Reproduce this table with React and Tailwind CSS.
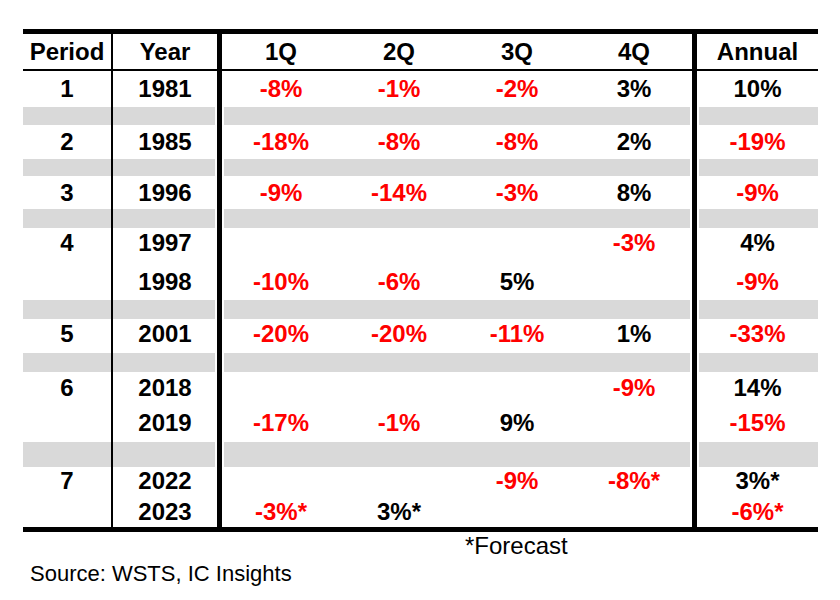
import clsx from 'clsx'

// one row of the table; vals = [period, year, 1Q, 2Q, 3Q, 4Q, annual]
function Row({ h, vals = [], pad = '', gray = false }) {
  return (
    <div className={clsx('grid grid-cols-[90px_109px_118px_118px_118px_121px_121px]', h)}>
      {[0, 1, 2, 3, 4, 5, 6].map((i) => {
        const v = vals[i] ?? ''
        return (
          <div
            key={i}
            className={clsx(
              'flex items-center justify-center text-[24px] font-bold leading-none',
              pad,
              i === 0 && 'border-r-2 border-black',
              (i === 1 || i === 5) && 'border-r-[5px] border-black',
              gray && 'bg-[#d9d9d9]',
              gray && (i === 1 || i === 5) && 'bg-clip-content pr-[2px]',
              gray && (i === 2 || i === 6) && 'bg-clip-content pl-[2px]',
              v.startsWith('-') ? 'text-[#ff0000]' : 'text-black'
            )}
          >
            {v}
          </div>
        )
      })}
    </div>
  )
}

export default function App() {
  return (
    <div className="min-h-screen w-[840px] h-[600px] bg-white pt-[29px] pl-[23px] font-['Liberation_Sans',Arial,sans-serif]">
      <div className="w-[795px] border-t-[5px] border-b-[5px] border-black">
        <div className="border-b-2 border-black">
          <Row h="h-[35px]" vals={['Period', 'Year', '1Q', '2Q', '3Q', '4Q', 'Annual']} />
        </div>
        <Row h="h-[36px]" vals={['1', '1981', '-8%', '-1%', '-2%', '3%', '10%']} />
        <Row h="h-[18px]" gray />
        <Row h="h-[34px]" vals={['2', '1985', '-18%', '-8%', '-8%', '2%', '-19%']} />
        <Row h="h-[17px]" gray />
        <Row h="h-[33px]" vals={['3', '1996', '-9%', '-14%', '-3%', '8%', '-9%']} />
        <Row h="h-[19px]" gray />
        <Row h="h-[30px]" vals={['4', '1997', '', '', '', '-3%', '4%']} />
        <Row h="h-[42px]" pad="pt-[6px]" vals={['', '1998', '-10%', '-6%', '5%', '', '-9%']} />
        <Row h="h-[19px]" gray />
        <Row h="h-[34px]" pad="pb-[4px]" vals={['5', '2001', '-20%', '-20%', '-11%', '1%', '-33%']} />
        <Row h="h-[19px]" gray />
        <Row h="h-[32px]" vals={['6', '2018', '', '', '', '-9%', '14%']} />
        <Row h="h-[38px]" vals={['', '2019', '-17%', '-1%', '9%', '', '-15%']} />
        <Row h="h-[25px]" gray />
        <Row h="h-[27px]" vals={['7', '2022', '', '', '-9%', '-8%*', '3%*']} />
        <Row h="h-[33px]" pad="pt-[3px]" vals={['', '2023', '-3%*', '3%*', '', '', '-6%*']} />
      </div>

      <p className="pl-[442px] text-[24px] leading-[28px] text-black">*Forecast</p>
      <p className="pl-[7px] text-[22px] leading-[28px] text-black">Source: WSTS, IC Insights</p>
    </div>
  )
}
